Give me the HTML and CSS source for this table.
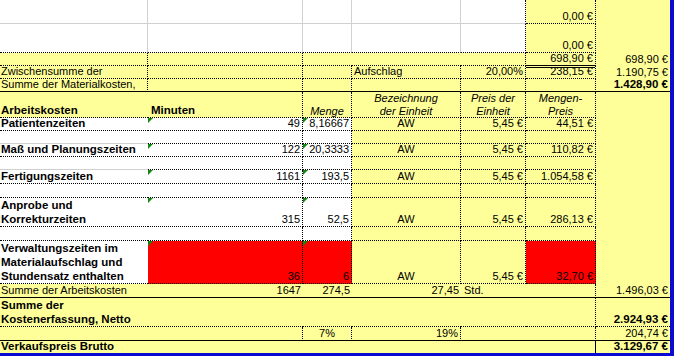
FILE: index.html
```html
<!DOCTYPE html>
<html lang="de">
<head>
<meta charset="utf-8">
<title>Kostenerfassung</title>
<link rel="stylesheet" href="styles.css">
</head>
<body>
<div class="sheet">
  <!-- row 1 -->
  <div class="c w gr gb"></div><div class="c w gr gb"></div><div class="c w gr gb"></div><div class="c w gr gb"></div><div class="c w dr gb"></div>
  <div class="c y dr db n">0,00 €</div><div class="c y"></div>
  <!-- row 2 -->
  <div class="c w gr db"></div><div class="c w gr db"></div><div class="c w gr db"></div><div class="c w gr db"></div><div class="c w dr db"></div>
  <div class="c y dr db n">0,00 €</div><div class="c y"></div>
  <!-- row 3 -->
  <div class="c y dr db first"></div><div class="c y dr db"></div><div class="c y db"></div><div class="c y db"></div><div class="c y dr db"></div>
  <div class="c y dr sb n">698,90 €</div><div class="c y n">698,90 €</div>
  <!-- row 4 -->
  <div class="c y dr db first">Zwischensumme der</div><div class="c y dr db"></div><div class="c y dr db"></div><div class="c y dr db">Aufschlag</div><div class="c y dr db n">20,00%</div>
  <div class="c y dr db n dtop">238,15 €</div><div class="c y n">1.190,75 €</div>
  <!-- row 5 -->
  <div class="c y dr sb first">Summe der Materialkosten,</div><div class="c y dr sb"></div><div class="c y dr sb"></div><div class="c y dr sb"></div><div class="c y dr sb"></div>
  <div class="c y dr sb"></div><div class="c y sb n b">1.428,90 €</div>
  <!-- row 6 header -->
  <div class="c y db b first">Arbeitskosten</div><div class="c y dr db b pl">Minuten</div><div class="c y dr db i">Menge</div>
  <div class="c y dr db i">Bezeichnung<br>der Einheit</div><div class="c y dr db i">Preis der<br>Einheit</div><div class="c y dr db i">Mengen-<br>Preis</div><div class="c y"></div>
  <!-- row 7 -->
  <div class="c w db b first">Patientenzeiten</div><div class="c w dr db n tri">49</div><div class="c w dr db n tri">8,16667</div>
  <div class="c y dr db m">AW</div><div class="c y dr db n">5,45 €</div><div class="c y dr db n">44,51 €</div><div class="c y"></div>
  <!-- row 8 -->
  <div class="c w gb"></div><div class="c w dr db"></div><div class="c w dr db"></div><div class="c y dr db"></div><div class="c y dr db"></div><div class="c y dr db"></div><div class="c y"></div>
  <!-- row 9 -->
  <div class="c w db b first">Maß und Planungszeiten</div><div class="c w dr db n tri">122</div><div class="c w dr db n tri">20,3333</div>
  <div class="c y dr db m">AW</div><div class="c y dr db n">5,45 €</div><div class="c y dr db n">110,82 €</div><div class="c y"></div>
  <!-- row 10 -->
  <div class="c w gb"></div><div class="c w dr db"></div><div class="c w dr db"></div><div class="c y dr db"></div><div class="c y dr db"></div><div class="c y dr db"></div><div class="c y"></div>
  <!-- row 11 -->
  <div class="c w db b first">Fertigungszeiten</div><div class="c w dr db n tri">1161</div><div class="c w dr db n tri">193,5</div>
  <div class="c y dr db m">AW</div><div class="c y dr db n">5,45 €</div><div class="c y dr db n">1.054,58 €</div><div class="c y"></div>
  <!-- row 12 -->
  <div class="c w db"></div><div class="c w dr db"></div><div class="c w dr db"></div><div class="c y dr db"></div><div class="c y dr db"></div><div class="c y dr db"></div><div class="c y"></div>
  <!-- row 13 -->
  <div class="c w db b ml first">Anprobe und<br>Korrekturzeiten</div><div class="c w dr db n tri">315</div><div class="c w dr db n tri">52,5</div>
  <div class="c y dr db m">AW</div><div class="c y dr db n">5,45 €</div><div class="c y dr db n">286,13 €</div><div class="c y"></div>
  <!-- row 14 -->
  <div class="c w db"></div><div class="c w dr db"></div><div class="c w dr db"></div><div class="c y dr db"></div><div class="c y dr db"></div><div class="c y dr db"></div><div class="c y"></div>
  <!-- row 15 -->
  <div class="c w db b ml first">Verwaltungszeiten im<br>Materialaufschlag und<br>Stundensatz enthalten</div><div class="c r dr db n tri">36</div><div class="c r dr db n tri">6</div>
  <div class="c y dr db m">AW</div><div class="c y dr db n">5,45 €</div><div class="c r dr db n">32,70 €</div><div class="c y"></div>
  <!-- row 16 -->
  <div class="c y sb first">Summe der Arbeitskosten</div><div class="c y sb n">1647</div><div class="c y sb n">274,5</div><div class="c y sb n">27,45</div><div class="c y sb t">Std.</div>
  <div class="c y dr sb"></div><div class="c y sb n">1.496,03 €</div>
  <!-- row 17 -->
  <div class="c y db b ml first">Summe der<br>Kostenerfassung, Netto</div><div class="c y db"></div><div class="c y db"></div><div class="c y db"></div><div class="c y db"></div>
  <div class="c y dr db"></div><div class="c y db n b">2.924,93 €</div>
  <!-- row 18 -->
  <div class="c y sb"></div><div class="c y dr sb"></div><div class="c y dr sb nc">7%</div><div class="c y dr sb n">19%</div><div class="c y sb"></div>
  <div class="c y dr sb"></div><div class="c y sb n">204,74 €</div>
  <!-- row 19 -->
  <div class="c y b first">Verkaufspreis Brutto</div><div class="c y"></div><div class="c y"></div><div class="c y"></div><div class="c y"></div>
  <div class="c y sr"></div><div class="c y n b">3.129,67 €</div>
</div>
</body>
</html>
```

FILE: styles.css
```css
html, body {
  margin: 0;
  padding: 0;
  background: #ffffff;
}

.sheet {
  display: grid;
  grid-template-columns: 148px 155px 49px 109px 65px 70px 74px;
  grid-template-rows: 24px 29px 13px 13px 13px 26px 13px 13px 13px 13px 14px 14px 29px 14px 43px 14px 29px 14px 12px;
  width: 670px;
  border-right: 4px solid #0a0ad0;
  border-bottom: 3px solid #0a0ad0;
  font-family: "Liberation Sans", Arial, sans-serif;
  font-size: 11px;
  color: #000;
}

.c {
  box-sizing: border-box;
  display: flex;
  align-items: flex-end;
  padding: 0 2px;
  white-space: nowrap;
  line-height: 13px;
  min-width: 0;
}

.first { padding-left: 1px; }
.pl { padding-left: 3px; }

.w { background-color: #ffffff; }
.y { background-color: #ffff99; }
.r { background-color: #ff0000; }

.gr { border-right: 1px solid #d0d0d0; }
.gb { border-bottom: 1px solid #d0d0d0; }
.dr { border-right: 1px dotted #000; }
.db { border-bottom: 1px dotted #000; }
.sr { border-right: 1px solid #000; }
.sb { border-bottom: 1px solid #000; }

.dtop {
  background-image: linear-gradient(#000, #000);
  background-size: 100% 1px;
  background-position: 0 1px;
  background-repeat: no-repeat;
}

.n { justify-content: flex-end; }
.nc { justify-content: center; }
.m { justify-content: center; }
.t { padding-left: 3px; }

.b {
  font-weight: bold;
  font-size: 11.5px;
}
.ml { line-height: 14px; }

.i {
  font-style: italic;
  justify-content: center;
  text-align: center;
  line-height: 12.5px;
}

.tri { position: relative; }
.tri::before {
  content: "";
  position: absolute;
  left: 0;
  top: 0;
  border-top: 5px solid #118811;
  border-right: 5px solid transparent;
}
```
